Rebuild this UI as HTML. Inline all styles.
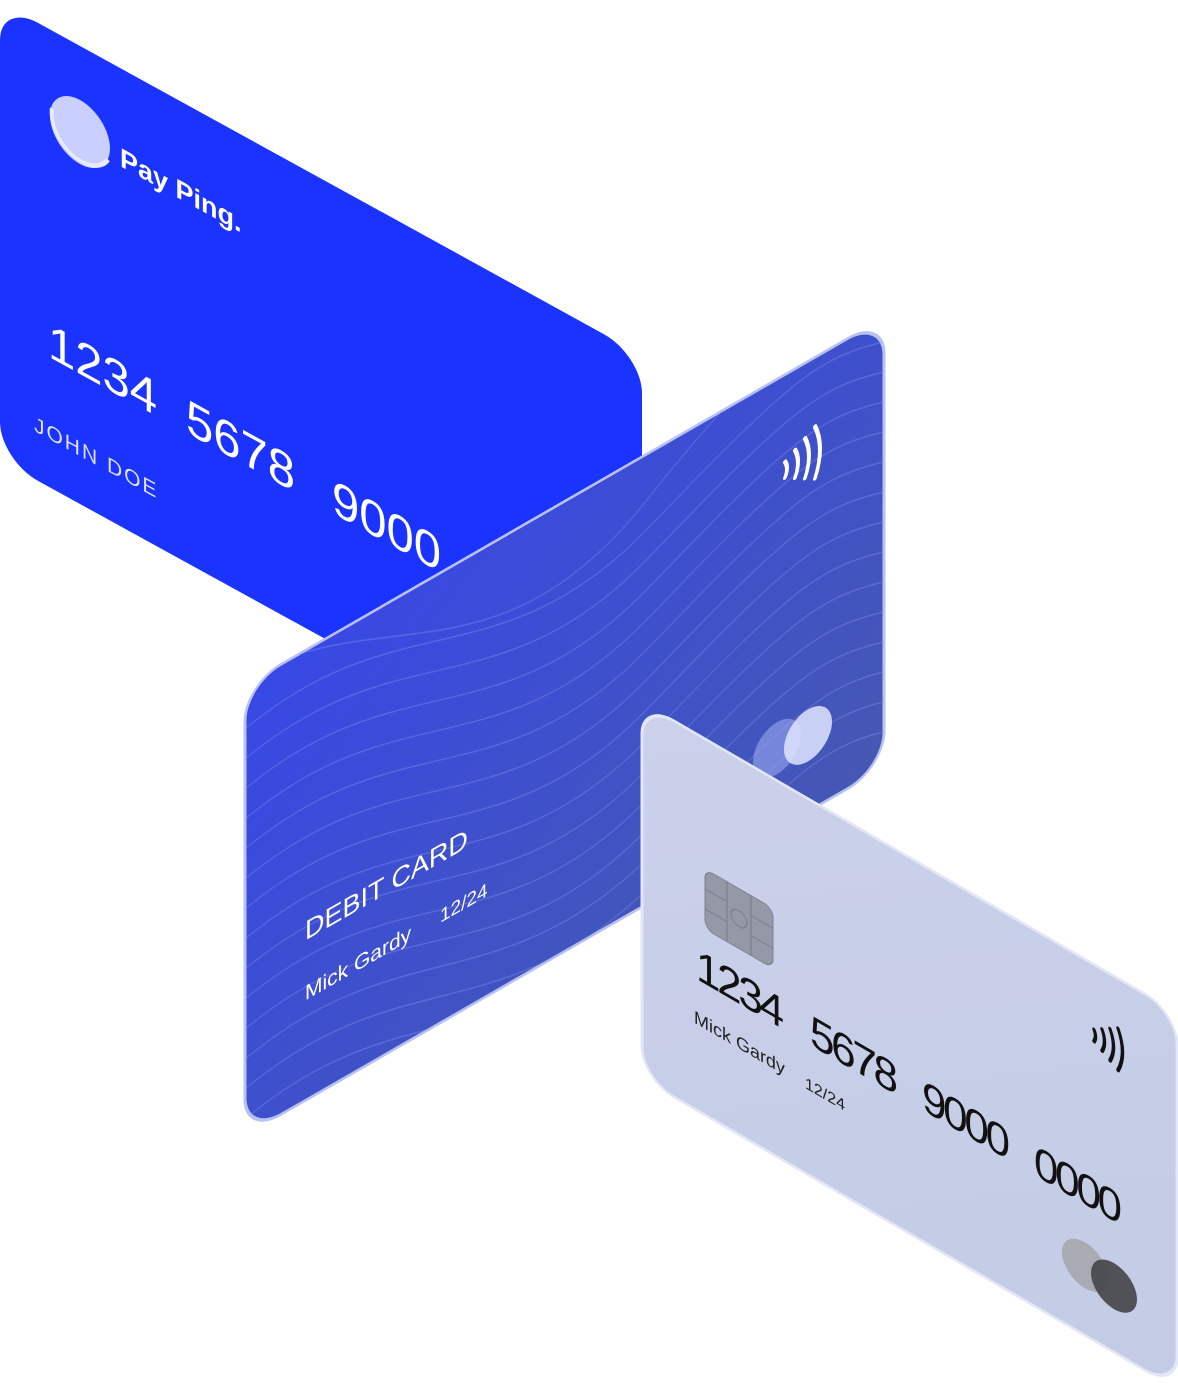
<!DOCTYPE html>
<html><head><meta charset="utf-8"><style>
html,body{margin:0;padding:0;background:#fff;width:1178px;height:1393px;overflow:hidden}
svg{display:block}
text{font-family:"Liberation Sans",sans-serif}
</style></head><body>
<svg width="1178" height="1393" viewBox="0 0 1178 1393" xmlns="http://www.w3.org/2000/svg">
<defs>
<linearGradient id="mid" x1="0" y1="0" x2="1" y2="1">
<stop offset="0" stop-color="#3848e6"/><stop offset="1" stop-color="#4558b2"/>
</linearGradient>
<linearGradient id="front" x1="0" y1="0" x2="1" y2="1">
<stop offset="0" stop-color="#cbd1ea"/><stop offset="1" stop-color="#c3cbe5"/>
</linearGradient>
<clipPath id="mc"><rect x="245" y="826" width="639" height="450" rx="36"/></clipPath>
</defs>

<!-- Back blue card -->
<g transform="matrix(1,0.55,0,1,0,0)">
<rect x="0" y="2" width="642" height="458" rx="38" fill="#1a33ff"/>
<ellipse cx="80" cy="88" rx="30" ry="32" fill="#c9d0ff"/>
<path d="M52 80 a30 32 0 0 0 56 20" stroke="#e8ebff" stroke-width="4" fill="none"/>
<text x="120" y="100" font-size="27" font-weight="bold" fill="#fff">Pay Ping.</text>
<text x="48" y="330" font-size="49" fill="#fff">1234</text>
<text x="186" y="330" font-size="49" fill="#fff">5678</text>
<text x="332" y="330" font-size="49" fill="#fff">9000</text>
<text x="34" y="412" font-size="21" fill="#dfe3ff" letter-spacing="2">JOHN DOE</text>
</g>

<!-- Middle card -->
<g transform="matrix(1,-0.575,0,1,0,0)">
<rect x="245" y="826" width="639" height="450" rx="36" fill="url(#mid)" stroke="#b8c2f0" stroke-width="3"/>
<g stroke="#8a98f0" stroke-opacity="0.35" fill="none" stroke-width="1.5" clip-path="url(#mc)">
<path d="M245 870 C400 830 500 970 650 900 S820 830 884 850"/>
<path d="M245 900 C400 860 500 1000 650 930 S820 860 884 880"/>
<path d="M245 930 C400 890 500 1030 650 960 S820 890 884 910"/>
<path d="M245 960 C400 920 500 1060 650 990 S820 920 884 940"/>
<path d="M245 990 C400 950 500 1090 650 1020 S820 950 884 970"/>
<path d="M245 1020 C400 980 500 1120 650 1050 S820 980 884 1000"/>
<path d="M245 1050 C400 1010 500 1150 650 1080 S820 1010 884 1030"/>
<path d="M245 1080 C400 1040 500 1180 650 1110 S820 1040 884 1060"/>
<path d="M245 1110 C400 1070 500 1210 650 1140 S820 1070 884 1090"/>
<path d="M245 1140 C400 1100 500 1240 650 1170 S820 1100 884 1120"/>
<path d="M245 1170 C400 1130 500 1270 650 1200 S820 1130 884 1150"/>
<path d="M245 1200 C400 1160 500 1290 650 1230 S820 1160 884 1180"/>
<path d="M245 1230 C400 1190 500 1320 650 1260 S820 1190 884 1210"/>
<path d="M245 1260 C400 1220 500 1350 650 1290 S820 1220 884 1240"/>
<path d="M300 826 C420 860 520 960 650 870 S820 800 884 820"/>
</g>
<text x="305" y="1116" font-size="27" fill="#fff">DEBIT CARD</text>
<text x="305" y="1176" font-size="21" fill="#fff">Mick Gardy</text>
<text x="440" y="1176" font-size="19" fill="#fff">12/24</text>
<g stroke="#fff" stroke-width="4" fill="none" stroke-linecap="round">
<path d="M785 913 q4 8 0 16"/><path d="M795 907 q6 14 0 28"/><path d="M805 901 q8 20 0 40"/><path d="M815 895 q10 26 0 52"/>
</g>
<ellipse cx="777" cy="1195" rx="24" ry="26" fill="#9aa6f0" fill-opacity="0.6"/>
<ellipse cx="808" cy="1200" rx="24" ry="26" fill="#e0e5ff" fill-opacity="0.85"/>
</g>

<!-- Front card -->
<g transform="matrix(1,0.58,0,1,0,0)">
<rect x="642" y="330" width="535" height="376" rx="32" fill="url(#front)" stroke="#e2e6f5" stroke-width="3"/>
<rect x="705" y="460" width="68" height="60" rx="9" fill="#9598a6" stroke="#7d8090" stroke-width="1"/>
<g stroke="#7d8090" stroke-width="1.2" fill="none">
<circle cx="739" cy="490" r="8"/>
<path d="M705 480 h22 M705 500 h22 M751 480 h22 M751 500 h22 M727 460 v60 M751 460 v60"/>
</g>
<g font-family="Liberation Mono,monospace" font-size="44" fill="#111">
<text x="696" y="575" textLength="88">1234</text>
<text x="810" y="575" textLength="88">5678</text>
<text x="922" y="575" textLength="88">9000</text>
<text x="1034" y="575" textLength="88">0000</text>
</g>
<text x="694" y="620" font-size="18" fill="#222">Mick Gardy</text>
<text x="805" y="621" font-size="16" fill="#222">12/24</text>
<g stroke="#111" stroke-width="3.5" fill="none" stroke-linecap="round">
<path d="M1094 395 q3 6 0 12"/><path d="M1102 390 q5 11 0 22"/><path d="M1110 385 q7 16 0 32"/><path d="M1118 380 q9 21 0 42"/>
</g>
<circle cx="1085" cy="636" r="23" fill="#a9aab2"/>
<circle cx="1114" cy="640" r="23" fill="#444548" fill-opacity="0.9"/>
</g>
</svg>
</body></html>
